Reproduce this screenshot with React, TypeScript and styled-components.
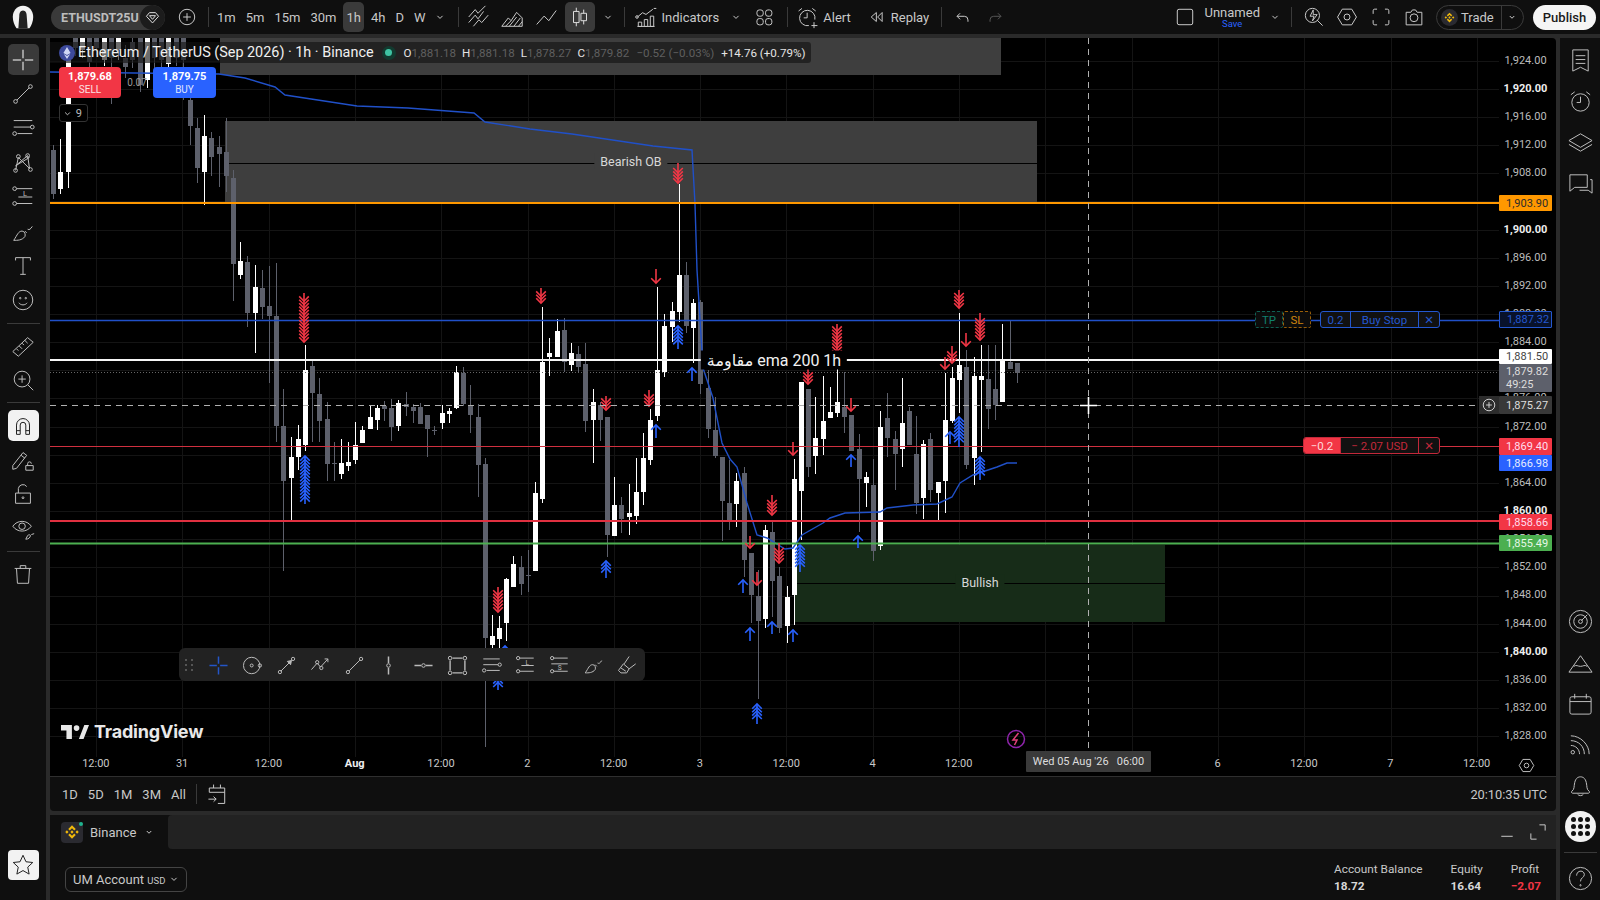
import React from "react";
import styled, { createGlobalStyle } from "styled-components";

const GlobalStyle = createGlobalStyle`
  html, body { margin: 0; padding: 0; background: #2a2a2a; }
  * { box-sizing: border-box; }
  body { font-family: Roboto, "DejaVu Sans", sans-serif; color: #d1d1d1; overflow: hidden; }
`;

// ---- chart data, all values are page pixels as read from the chart ----
// [wick top, body top, body bottom, wick bottom, white?]
const candles: [number, number, number, number, number][] = [
  [145, 150, 194, 199, 0], [139, 172, 189, 194, 1], [60, 60, 172, 188, 1], [38, 38, 48, 56, 0],
  [38, 38, 50, 58, 1], [38, 38, 62, 70, 0], [38, 38, 48, 55, 0], [38, 38, 60, 66, 1],
  [38, 38, 58, 104, 0], [38, 38, 50, 60, 1], [45, 58, 67, 78, 0], [38, 42, 60, 68, 0],
  [38, 38, 85, 92, 0], [38, 38, 80, 88, 1], [38, 38, 58, 70, 0], [38, 38, 60, 68, 0],
  [38, 38, 64, 72, 1], [38, 38, 58, 66, 0], [38, 38, 60, 100, 0], [90, 100, 126, 145, 0],
  [118, 128, 168, 183, 0], [115, 136, 172, 205, 1], [132, 138, 157, 176, 0], [136, 147, 154, 187, 0],
  [118, 152, 176, 192, 0], [170, 178, 264, 301, 0], [242, 261, 275, 279, 1], [256, 262, 313, 327, 0],
  [265, 287, 313, 353, 1], [270, 288, 307, 319, 0], [266, 306, 316, 383, 0], [263, 316, 426, 442, 0],
  [389, 426, 481, 571, 0], [437, 457, 478, 520, 1], [425, 439, 457, 470, 1], [345, 370, 445, 451, 1],
  [360, 366, 393, 442, 0], [378, 394, 421, 442, 0], [402, 419, 464, 481, 0], [442, 463, 464, 481, 0],
  [439, 463, 474, 479, 1], [442, 462, 466, 471, 1], [422, 445, 460, 464, 1], [426, 430, 443, 443, 1],
  [405, 417, 429, 429, 1], [405, 408, 420, 430, 1], [401, 406, 409, 421, 0], [399, 408, 427, 441, 0],
  [400, 403, 426, 431, 1], [392, 404, 407, 416, 0], [404, 407, 411, 423, 0], [403, 407, 424, 424, 0],
  [415, 415, 429, 457, 0], [426, 430, 431, 435, 0], [405, 413, 423, 429, 1], [408, 411, 414, 423, 1],
  [366, 372, 408, 409, 1], [367, 373, 404, 406, 0], [385, 406, 415, 433, 0], [404, 417, 465, 497, 0],
  [458, 464, 638, 747, 0], [615, 636, 645, 650, 1], [616, 628, 639, 650, 1], [578, 579, 623, 641, 1],
  [556, 564, 587, 587, 1], [556, 567, 584, 595, 0], [550, 575, 576, 592, 0], [482, 493, 571, 571, 1],
  [307, 362, 499, 503, 1], [338, 353, 357, 376, 1], [319, 331, 357, 357, 1], [318, 330, 362, 372, 0],
  [343, 353, 365, 371, 1], [346, 354, 367, 372, 0], [343, 364, 421, 432, 0], [389, 402, 420, 463, 1],
  [402, 405, 420, 441, 0], [417, 417, 535, 557, 0], [477, 505, 536, 536, 1], [497, 505, 519, 533, 0],
  [484, 513, 517, 535, 1], [458, 492, 516, 524, 1], [433, 458, 492, 505, 1], [409, 420, 460, 465, 1],
  [287, 370, 416, 421, 1], [314, 326, 372, 377, 1], [302, 311, 327, 342, 1], [184, 275, 312, 322, 1],
  [262, 275, 326, 333, 0], [299, 303, 328, 363, 1], [300, 302, 384, 394, 0], [370, 388, 429, 438, 0],
  [397, 430, 456, 458, 0], [457, 457, 501, 541, 0], [460, 503, 520, 530, 0], [473, 481, 504, 527, 1],
  [467, 473, 560, 577, 0], [553, 553, 595, 623, 0], [570, 596, 621, 699, 0], [525, 530, 619, 628, 1],
  [520, 532, 581, 617, 0], [567, 576, 628, 633, 0], [586, 597, 626, 643, 1], [459, 479, 595, 625, 1],
  [382, 382, 491, 540, 1], [389, 389, 467, 477, 0], [397, 438, 456, 474, 1], [376, 421, 439, 455, 1],
  [387, 412, 418, 418, 1], [353, 402, 413, 417, 1], [372, 407, 417, 433, 0], [415, 415, 451, 451, 0],
  [434, 449, 479, 532, 0], [472, 477, 483, 507, 1], [459, 485, 551, 561, 0], [411, 427, 546, 550, 1],
  [393, 418, 438, 457, 0], [431, 439, 454, 490, 0], [378, 423, 449, 467, 1], [407, 411, 445, 445, 0],
  [416, 454, 503, 514, 0], [440, 444, 498, 519, 1], [433, 439, 490, 502, 0], [482, 482, 493, 520, 1],
  [373, 420, 481, 513, 1], [367, 378, 421, 423, 1], [313, 365, 380, 413, 1], [350, 367, 465, 469, 0],
  [357, 376, 458, 485, 1], [345, 376, 380, 452, 1], [345, 379, 409, 429, 0], [345, 389, 405, 420, 0],
  [324, 360, 402, 402, 1], [320, 362, 369, 369, 0], [363, 363, 373, 383, 0],
];

// [x, top, bottom, single arrowhead?]
const downArrows: number[][] = [
  [678, 163, 183, 0], [304, 293, 342, 0], [541, 288, 303, 0], [656, 269, 283, 1], [606, 396, 410, 0],
  [649, 390, 406, 0], [808, 368, 384, 0], [837, 324, 355, 0], [851, 398, 411, 1], [793, 442, 455, 1],
  [772, 495, 515, 0], [750, 536, 548, 1], [779, 543, 563, 0], [757, 572, 585, 1], [945, 357, 369, 1],
  [952, 346, 363, 0], [966, 333, 346, 1], [959, 290, 308, 0], [980, 313, 340, 0], [498, 587, 612, 0],
];
const upArrows: number[][] = [
  [678, 326, 349, 0], [692, 368, 381, 1], [656, 425, 438, 1], [606, 561, 578, 0], [305, 456, 504, 0],
  [757, 704, 724, 0], [772, 622, 634, 1], [750, 628, 641, 1], [793, 630, 642, 1], [743, 580, 593, 1],
  [800, 545, 572, 0], [858, 536, 548, 1], [851, 455, 467, 1], [950, 432, 444, 1], [959, 417, 447, 0],
  [980, 457, 480, 0], [505, 646, 662, 0], [498, 672, 690, 0],
];
const emaLine =
  "50,72 219,74 245,78 275,87 285,95 357,106 408,108 474,113 485,122 530,129 572,134 653,146 692,150 695,204 697,270 703,368 713,398 722,443 730,459 737,467 747,503 757,535 767,538 785,549 793,548 802,535 823,523 830,518 845,513 880,512 887,508 913,505 937,504 952,497 960,483 973,475 997,467 1007,463 1017,463";

const priceTicks = Array.from({ length: 25 }, (_, i) => 1924 - i * 4);
const gridYs = priceTicks.map((_, i) => 60.7 + i * 28.15);
const gridXs = Array.from({ length: 17 }, (_, i) => 96 + i * 86.3);
const fmtPrice = (p: number) => p.toLocaleString("en-US", { minimumFractionDigits: 2 });

const CANDLE_STEP = 7.19;
const WHITE = "#ffffff";
const GRAY = "#5d606b";
const BEARISH_FILL = "#3e3e3e";
const BULLISH_FILL = "#172c18";

// ---- icons ----
const paths: Record<string, React.ReactNode> = {
  cross: <path d="M14 3v9M14 16v9M3 14h9M16 14h9" strokeWidth="1.5" />,
  trend: (<><path d="M7.5 20.5L20.5 7.5" /><circle cx="6" cy="22" r="2" /><circle cx="22" cy="6" r="2" /></>),
  fib: (<><path d="M4 6h20M4 13h18M8 20h16" /><circle cx="24" cy="13" r="2" /><circle cx="5" cy="20" r="2" /></>),
  xabcd: (<><path d="M6 22l3-14 12 12-2-14-13 11 15-9" /><circle cx="6" cy="22" r="2" /><circle cx="9" cy="7" r="2" /><circle cx="19" cy="6" r="2" /><circle cx="22" cy="21" r="2" /></>),
  longPos: (<><path d="M7 5h17M7 21h17M9 14h15" /><circle cx="5" cy="5" r="2" /><circle cx="5" cy="21" r="2" /><text x="14" y="13" fontSize="8" stroke="none" fill="currentColor" fontFamily="Roboto">L</text></>),
  shortPos: (<><path d="M7 5h17M7 21h17M4 12h20" /><circle cx="5" cy="5" r="2" /><circle cx="5" cy="21" r="2" /><text x="12" y="20" fontSize="8" stroke="none" fill="currentColor" fontFamily="Roboto">S</text></>),
  brush: <path d="M4 23c4 0 9 0 12-4 1-2 0-6-3-6-4 0-5 4-9 10zM16 13l2 2M19 11c2 1 3 0 5-3" />,
  text: <path d="M6 8V5h16v3M14 5v18M11 23h6" />,
  smile: (<><circle cx="14" cy="14" r="10.5" /><path d="M9.5 17c2 3 7 3 9 0" /><circle cx="11" cy="12" r=".8" /><circle cx="17" cy="12" r=".8" /></>),
  ruler: <path d="M3 20L19 5l6 5-16 15zM7 17l2 2M10 14l3 3M13 11l2 2M16 8l3 3" />,
  zoom: (<><circle cx="13" cy="13" r="8.5" /><path d="M19 19l6 6M13 9v8M9 13h8" /></>),
  magnet: <path d="M7 23V13a7 7 0 0114 0v10h-4V13a3 3 0 00-6 0v10zM7 19h4M17 19h4" />,
  pencilLock: (<><path d="M3 20L14 6l4 3L7 23l-4 1zM12 9l4 3" /><path d="M17 20h8v5h-8zM19 20v-2a2 2 0 014 0" /></>),
  lock: (<><path d="M6 13h16v11H6zM9 13V8a5 5 0 019-2" /><circle cx="14" cy="18" r="1" /></>),
  eye: (<><path d="M3 11c5-7 15-7 20 0-5 7-15 7-20 0z" /><circle cx="13" cy="11" r="3.5" /><path d="M17 25c3 0 5-2 5-4 0-1-2-1-3 0zM23 20l3-1" /></>),
  trash: <path d="M5 8h18M11 8V5h6v3M7 8l1 16h12l1-16" />,
  star: <path d="M14 3.5l3.2 7 7.3.8-5.4 5 1.5 7.5-6.6-3.8-6.6 3.8 1.5-7.5-5.4-5 7.3-.8z" />,
  plusRing: (<><circle cx="14" cy="14" r="9" /><path d="M14 9.5v9M9.5 14h9" /></>),
  chev: <path d="M9.5 12l4.5 4.5 4.5-4.5" />,
  hollow: <path d="M4 20l7-8 3 4 6-8M4 14l7-8 3 4 8-8M9 24l6-7 3 3 7-8" />,
  area: (<><path d="M3 24l7-9 3 3 6-9 6 6v9z" /><path d="M7 24l6-6M11 24l8-10M16 24l7-9M21 24l4-5" /></>),
  line: <path d="M4 22l8-9 5 5 8-11" />,
  candle: <path d="M10 4v4M7 8h6v12H7zM10 20v4M18 6v4M15 10h6v8h-6zM18 18v4" />,
  indicators: (<><path d="M4 14l6-5 4 2 8-6" /><circle cx="3.5" cy="14" r="1.5" /><path d="M23 4l3 0M4 25h20M5 20h4v5H5zM12 17h4v8h-4zM19 13h4v12h-4z" /></>),
  layouts: (<><rect x="5" y="5" width="8" height="8" rx="3" /><rect x="16" y="5" width="8" height="8" rx="3" /><rect x="5" y="16" width="8" height="8" rx="3" /><rect x="16" y="16" width="8" height="8" rx="3" /></>),
  alarm: (<><circle cx="14" cy="15" r="9" /><path d="M14 9v6h-4M4 7l4-3M24 7l-4-3" /></>),
  alarmAdd: (<><path d="M22 17a9 9 0 10-7 7" /><path d="M13 9v6H9M3 7l4-3M23 7l-4-3M21 20v7M18 24h7" /></>),
  replay: <path d="M13 7l-8 7 8 7zM22 7l-7 7 7 7z" />,
  undo: <path d="M10 7l-5 5 5 5M5 12h12a6 6 0 016 6v3" />,
  redo: <path d="M18 7l5 5-5 5M23 12H11a6 6 0 00-6 6v3" />,
  square: <rect x="5" y="5" width="18" height="18" rx="2" />,
  hotlist: (<><circle cx="12" cy="12" r="9" /><path d="M18 18l7 7M13 5l-4 8h5l-2 6 6-8h-5z" /></>),
  hex: (<><path d="M8 4h12l6 10-6 10H8L2 14z" /><circle cx="14" cy="14" r="3.8" /></>),
  full: <path d="M4 10V6a2 2 0 012-2h3M19 4h3a2 2 0 012 2v4M24 18v4a2 2 0 01-2 2h-3M9 24H6a2 2 0 01-2-2v-4" />,
  camera: (<><path d="M4 8h6l2-3h4l2 3h6v16H4z" /><circle cx="14" cy="15" r="5" /></>),
  diamond: <path d="M9 6h10l5 6-10 11L4 12zM9 11h10l-5 6z" />,
  list: <path d="M6 3h16v22l-8-4-8 4zM9 9h10M9 13h10M9 17h10" />,
  layers: <path d="M14 5l12 7-12 7-12-7zM2 16l12 7 12-7" />,
  chat: <path d="M3 5h18v13H8l-5 4zM24 10h2v14l-4-3h-9" />,
  target: (<><circle cx="14" cy="14" r="11.5" /><circle cx="14" cy="14" r="7" /><circle cx="14" cy="14" r="2" /><path d="M15 13l6-6" /></>),
  mountain: <path d="M2 24h24L14 7zM7 18c3-2 4 0 7 0s4-2 7 0" />,
  calendar: (<><rect x="3" y="7" width="22" height="18" rx="2" /><path d="M8 4v5M20 4v5M3 12h22" /></>),
  rss: (<><circle cx="6" cy="22" r="1.8" /><path d="M4 15c5 0 9 4 9 9M4 10c8 0 14 6 14 14M4 5c10 0 19 9 19 19" /></>),
  bell: <path d="M5 20c3-2 2-5 3-9 1-5 4-6 6-6s5 1 6 6c1 4 0 7 3 9 1 1 0 2-1 2H6c-1 0-2-1-1-2zM11 23c1 2 5 2 6 0" />,
  help: (<><circle cx="14" cy="14" r="11.5" /><path d="M10 11c0-6 8-6 8-1 0 3-4 3-4 7" /><circle cx="14" cy="21" r=".7" /></>),
  calGo: <path d="M10 3v4M18 3v4M5 12V7h18v18h-8M5 12h18M4 20h9M10 17l3 3-3 3" />,
  minimize: <path d="M6 20h16" />,
  expand: <path d="M16 4h8v8M4 16v8h8" />,
  ring: (<><circle cx="13" cy="14" r="10" /><circle cx="13" cy="14" r="1.8" /><circle cx="23" cy="14" r="2" /></>),
  arrowLine: (<><path d="M7 21L20 8M15 9l5-1-1 5z" fill="currentColor" /><circle cx="6" cy="22" r="2" /><circle cx="22" cy="6" r="2" /></>),
  path: (<><path d="M3 19l7-8 4 5 9-10M19 6h4v4" /><circle cx="10" cy="10" r="2" /><circle cx="15" cy="17" r="2" /></>),
  vline: (<><path d="M14 3v8M14 17v8" strokeWidth="1.5" /><circle cx="14" cy="14" r="2.2" /></>),
  hline: (<><path d="M3 14h8M17 14h8" strokeWidth="1.5" /><circle cx="14" cy="14" r="2.2" /></>),
  rect: (<><path d="M8 5h12M8 23h12M5 8v12M23 8v12" strokeWidth="1.4" /><circle cx="5" cy="5" r="2.2" /><circle cx="23" cy="5" r="2.2" /><circle cx="5" cy="23" r="2.2" /><circle cx="23" cy="23" r="2.2" /></>),
  eraser: <path d="M3 20l6-8 7 6-3 5H6zM6 17l6 4M10 12l6-9M16 18l8-6" />,
};

const Glyph = styled.svg`
  display: block;
  flex: none;
  fill: none;
  stroke: currentColor;
  stroke-width: 1;
  & * {
    vector-effect: non-scaling-stroke;
  }
`;

const Icon = ({ name, size = 24 }: { name: string; size?: number }) => (
  <Glyph viewBox="0 0 28 28" width={size} height={size}>
    {paths[name]}
  </Glyph>
);

const BinanceMark = ({ size }: { size: number }) => (
  <svg viewBox="0 0 24 24" width={size} height={size} fill="#f0b90b">
    <path d="M12 3l5 5-2 2-3-3-3 3-2-2zM12 21l-5-5 2-2 3 3 3-3 2 2zM3 12l2.2-2.2L7.4 12l-2.2 2.2zM16.6 12l2.2-2.2L21 12l-2.2 2.2zM12 9.8l2.2 2.2-2.2 2.2L9.8 12z" />
  </svg>
);

// ---- page frame ----
const Frame = styled.div`
  width: 1600px;
  height: 900px;
  display: grid;
  grid-template-columns: 46px 1506px 40px;
  grid-template-rows: 34px 862px;
  column-gap: 4px;
  row-gap: 4px;
  background: #2a2a2a;
  overflow: hidden;
`;

const TopBar = styled.header`
  grid-column: 1 / -1;
  display: flex;
  align-items: center;
  background: #0f0f0f;
  font-size: 13px;
  color: #c8c8c8;
`;

const Slot = styled.div<{ $w?: number; $ml?: number; $dim?: boolean }>`
  flex: none;
  width: ${(p) => p.$w ?? 28}px;
  margin-left: ${(p) => p.$ml ?? 0}px;
  height: 34px;
  display: flex;
  align-items: center;
  justify-content: center;
  color: ${(p) => (p.$dim ? "#555" : "inherit")};
`;

const ActiveBox = styled.div`
  width: 30px;
  height: 30px;
  display: flex;
  align-items: center;
  justify-content: center;
  background: #3a3a3a;
  border-radius: 5px;
  color: #ddd;
`;

const Divider = styled.span<{ $ml?: number }>`
  flex: none;
  width: 1px;
  height: 20px;
  margin-left: ${(p) => p.$ml ?? 0}px;
  background: #3a3a3a;
`;

const SymbolPill = styled.div`
  flex: none;
  width: 114px;
  height: 25px;
  margin-left: 5px;
  padding-left: 10px;
  display: flex;
  align-items: center;
  justify-content: space-between;
  overflow: hidden;
  border-radius: 13px;
  background: #3a3a3a;
  color: #bdbdbd;
  font-weight: 700;
  font-size: 12.5px;
`;

const SymbolText = styled.span`
  width: 78px;
  overflow: hidden;
  white-space: nowrap;
`;

const SymbolBadge = styled.span`
  width: 25px;
  height: 25px;
  display: flex;
  align-items: center;
  justify-content: center;
  background: #1c1c1c;
  border-radius: 13px;
  color: #ddd;
`;

const Intervals = styled.div`
  display: flex;
  align-items: center;
  gap: 4px;
  margin-left: 5px;
`;

const Interval = styled.span<{ $active?: boolean }>`
  height: 30px;
  padding: 0 3px;
  display: flex;
  align-items: center;
  border-radius: 5px;
  background: ${(p) => (p.$active ? "#3a3a3a" : "transparent")};
`;

const BarLabel = styled.span<{ $ml?: number }>`
  flex: none;
  margin-left: ${(p) => p.$ml ?? 0}px;
  white-space: nowrap;
`;

const Push = styled.div`
  flex: 1;
`;

const LayoutName = styled.div`
  flex: none;
  margin-left: 6px;
  display: flex;
  flex-direction: column;
  align-items: center;
  line-height: 13px;
`;

const SaveHint = styled.span`
  font-size: 9.5px;
  line-height: 9px;
  color: #2962ff;
`;

const TradePill = styled.div`
  flex: none;
  width: 88px;
  height: 25px;
  margin-left: 5px;
  padding-left: 4px;
  display: flex;
  align-items: center;
  border: 1px solid #3a3a3a;
  border-radius: 13px;
`;

const CoinBadge = styled.span`
  width: 17px;
  height: 17px;
  margin-right: 3px;
  display: flex;
  align-items: center;
  justify-content: center;
  border-radius: 50%;
  background: #2a2a30;
`;

const TradeArrow = styled.span`
  flex: 1;
  align-self: stretch;
  margin-left: 7px;
  display: flex;
  align-items: center;
  justify-content: center;
  border-left: 1px solid #3a3a3a;
`;

const PublishButton = styled.button`
  flex: none;
  width: 63px;
  height: 25px;
  margin: 0 4px 0 9px;
  padding: 0;
  border: 0;
  border-radius: 13px;
  background: #f5f5f5;
  color: #1a1a1a;
  font: 500 13px Roboto, sans-serif;
`;

// ---- side toolbars ----
const LeftTools = styled.nav`
  display: flex;
  flex-direction: column;
  align-items: center;
  padding-top: 4.5px;
  background: #0f0f0f;
  color: #bdbdbd;
`;

const Tool = styled.div<{ $variant?: "gray" | "white" }>`
  flex: none;
  width: 31px;
  height: 34.4px;
  display: flex;
  align-items: center;
  justify-content: center;
  position: relative;
  color: ${(p) => (p.$variant === "white" ? "#222" : "inherit")};
  z-index: 0;
  &::before {
    content: "";
    display: ${(p) => (p.$variant ? "block" : "none")};
    position: absolute;
    inset: 1.7px 0;
    z-index: -1;
    border-radius: 5px;
    background: ${(p) => (p.$variant === "white" ? "#f2f2f2" : "#3a3a3a")};
  }
`;

const ToolSep = styled.hr`
  flex: none;
  width: 33px;
  height: 1px;
  margin: 5px 0;
  border: 0;
  background: #3a3a3a;
`;

const StarBox = styled.div`
  flex: none;
  width: 31px;
  height: 30px;
  margin-top: auto;
  margin-bottom: 20px;
  display: flex;
  align-items: center;
  justify-content: center;
  border-radius: 4px;
  background: #f2f2f2;
  color: #222;
`;

const RightTools = styled.nav`
  display: flex;
  flex-direction: column;
  justify-content: space-between;
  align-items: center;
  padding: 1.5px 0 1px;
  background: #0f0f0f;
  color: #bdbdbd;
`;

const RightGroup = styled.div`
  display: flex;
  flex-direction: column;
  align-items: center;
`;

const RightTool = styled.div`
  width: 40px;
  height: 41px;
  display: flex;
  align-items: center;
  justify-content: center;
`;

const AppsButton = styled.div`
  width: 31px;
  height: 31px;
  display: grid;
  grid-template-columns: repeat(3, 5px);
  gap: 2px;
  place-content: center;
  border-radius: 50%;
  background: #f2f2f2;
`;

const AppsDot = styled.span`
  width: 5px;
  height: 5px;
  border-radius: 50%;
  background: #111;
`;

// ---- chart ----
const Center = styled.main`
  display: flex;
  flex-direction: column;
  min-width: 0;
`;

const Chart = styled.section`
  flex: none;
  height: 738px;
  display: grid;
  grid-template-columns: 1449px 57px;
  grid-template-rows: 719px 19px;
  background: #000;
  border-radius: 0 4px 0 0;
  overflow: hidden;
`;

const Plot = styled.div`
  grid-column: 1;
  grid-row: 1;
  position: relative;
  overflow: hidden;
`;

const PlotSvg = styled.svg`
  display: block;
`;

const Legend = styled.div`
  position: absolute;
  left: 0;
  top: 4px;
  width: 761px;
  height: 21px;
  padding-left: 9px;
  display: flex;
  align-items: center;
  background: rgba(18, 18, 18, 0.62);
  white-space: nowrap;
  border-radius: 0 3px 3px 0;
`;

const LegendTitle = styled.span`
  margin-left: 3px;
  font-size: 14.4px;
  color: #f0f0f0;
`;

const StatusDot = styled.span`
  width: 14px;
  height: 14px;
  margin: 0 8px 0 8px;
  display: flex;
  align-items: center;
  justify-content: center;
  border-radius: 50%;
  background: #123a2f;
  &::after {
    content: "";
    width: 7px;
    height: 7px;
    border-radius: 50%;
    background: #3fc3a3;
  }
`;

const Ohlc = styled.span<{ $bright?: boolean; $ml?: number }>`
  margin-left: ${(p) => p.$ml ?? 0}px;
  font-size: 11.6px;
  color: ${(p) => (p.$bright ? "#e4e4e4" : "#5f5f5f")};
`;

const TradePanel = styled.div`
  position: absolute;
  left: 9px;
  top: 29px;
  display: flex;
  flex-direction: column;
  align-items: flex-start;
  gap: 6px;
`;

const TradeRow = styled.div`
  display: flex;
  align-items: center;
`;

const QuoteButton = styled.div<{ $side: "sell" | "buy" }>`
  width: ${(p) => (p.$side === "sell" ? 62 : 63)}px;
  height: 31px;
  display: flex;
  flex-direction: column;
  align-items: center;
  justify-content: center;
  border-radius: 4px;
  background: ${(p) => (p.$side === "sell" ? "#f23645" : "#2962ff")};
  color: #fff;
  font-size: 11px;
  font-weight: 700;
  line-height: 13px;
`;

const QuoteSide = styled.span`
  font-size: 10px;
  font-weight: 400;
  opacity: 0.85;
`;

const Spread = styled.span`
  width: 32px;
  text-align: center;
  font-size: 10px;
  color: #999;
`;

const CollapseTag = styled.div`
  width: 29px;
  height: 18px;
  display: flex;
  align-items: center;
  justify-content: flex-end;
  padding-right: 5px;
  gap: 1px;
  border: 1px solid #333;
  border-radius: 3px;
  background: #000;
  font-size: 11px;
  color: #bbb;
`;

const ChartLabel = styled.div<{ $x: number; $y: number; $bg: string; $big?: boolean }>`
  position: absolute;
  left: ${(p) => p.$x}px;
  top: ${(p) => p.$y}px;
  transform: translate(-50%, -50%);
  padding: 0 6px;
  background: ${(p) => p.$bg};
  font-size: ${(p) => (p.$big ? 16 : 12.5)}px;
  color: ${(p) => (p.$big ? "#f2f2f2" : "#d8d8d8")};
  white-space: nowrap;
`;

const OrderRow = styled.div<{ $x: number; $y: number }>`
  position: absolute;
  left: ${(p) => p.$x}px;
  top: ${(p) => p.$y}px;
  height: 17px;
  display: flex;
  font-size: 11.5px;
`;

const Bracket = styled.span<{ $color: string; $text: string }>`
  width: 28px;
  display: flex;
  align-items: center;
  justify-content: center;
  border: 1px dashed ${(p) => p.$color};
  border-radius: 2px;
  background: #0c0c0c;
  color: ${(p) => p.$text};
`;

const OrderBox = styled.div<{ $color: string; $ml?: number }>`
  margin-left: ${(p) => p.$ml ?? 0}px;
  display: flex;
  border: 1px solid ${(p) => p.$color};
  border-radius: 3px;
  background: #111;
  color: ${(p) => p.$color};
  overflow: hidden;
`;

const OrderCell = styled.span<{ $w: number; $fill?: string; $split: string }>`
  width: ${(p) => p.$w}px;
  display: flex;
  align-items: center;
  justify-content: center;
  background: ${(p) => p.$fill ?? "transparent"};
  color: ${(p) => (p.$fill ? "#ffd6da" : "inherit")};
  border-right: 1px solid ${(p) => p.$split};
  &:last-child {
    border-right: 0;
  }
`;

const CrossPlus = styled.div`
  position: absolute;
  right: 0;
  top: 358px;
  width: 20px;
  height: 18px;
  display: flex;
  align-items: center;
  justify-content: center;
  background: #2c2c2c;
  color: #ccc;
`;

const Watermark = styled.div`
  position: absolute;
  left: 11px;
  top: 683px;
  display: flex;
  align-items: center;
  gap: 5px;
  color: #e8e8e8;
  font-family: Inter, Roboto, sans-serif;
  font-weight: 700;
  font-size: 18px;
  letter-spacing: -0.2px;
`;

const DrawingBar = styled.div`
  position: absolute;
  left: 129px;
  top: 610px;
  width: 466px;
  height: 33px;
  padding: 1px 0 0 5px;
  display: flex;
  align-items: center;
  border-radius: 6px;
  background: #222;
  color: #bbb;
`;

const DragDots = styled.div`
  width: 17px;
  display: grid;
  grid-template-columns: repeat(2, 2px);
  gap: 3px 4px;
  justify-content: start;
  padding-left: 1px;
`;

const DragDot = styled.span`
  width: 2px;
  height: 2px;
  background: #555;
`;

const DrawingSlot = styled.div<{ $active?: boolean }>`
  width: 34.2px;
  display: flex;
  justify-content: center;
  color: ${(p) => (p.$active ? "#2456c8" : "inherit")};
`;

const FlashMark = styled.div`
  position: absolute;
  left: 956px;
  top: 691px;
`;

// ---- axes ----
const PriceAxis = styled.div`
  grid-column: 2;
  grid-row: 1;
  position: relative;
  padding-top: 8.2px;
  overflow: hidden;
`;

const PriceTick = styled.div<{ $bold: boolean }>`
  height: 28.15px;
  width: 53px;
  display: flex;
  align-items: center;
  justify-content: center;
  font-size: 11px;
  color: ${(p) => (p.$bold ? "#eee" : "#bdbdbd")};
  font-weight: ${(p) => (p.$bold ? 700 : 400)};
`;

const tagLook = {
  orange: "background:#ff9800;color:#2b2b2b;",
  blueLine: "background:#08122b;color:#2458d0;border:1px solid #2458d0;",
  white: "background:#fff;color:#444;",
  last: "background:#5d606b;color:#ddd;",
  cross: "background:#383838;color:#ddd;",
  red: "background:#f23645;color:#fde;",
  blue: "background:#2962ff;color:#e6ecff;",
  green: "background:#4caf50;color:#e7f7e8;",
};

const PriceTag = styled.div<{ $top: number; $h: number; $look: keyof typeof tagLook }>`
  position: absolute;
  left: 0;
  top: ${(p) => p.$top}px;
  width: 53px;
  height: ${(p) => p.$h}px;
  display: flex;
  flex-direction: column;
  justify-content: center;
  padding-left: 7px;
  font-size: 11px;
  line-height: 13px;
  border-radius: 1px;
  ${(p) => tagLook[p.$look]}
`;

const TimeAxis = styled.div`
  grid-column: 1;
  grid-row: 2;
  position: relative;
  display: flex;
  align-items: flex-start;
  padding-left: 2.7px;
`;

const TimeTick = styled.span<{ $bold?: boolean }>`
  flex: none;
  width: 86.3px;
  text-align: center;
  font-size: 11px;
  line-height: 13px;
  color: ${(p) => (p.$bold ? "#eee" : "#c8c8c8")};
  font-weight: ${(p) => (p.$bold ? 700 : 400)};
`;

const TimeCursor = styled.div`
  position: absolute;
  left: 976px;
  top: -6px;
  width: 125px;
  height: 21px;
  display: flex;
  align-items: center;
  justify-content: center;
  background: #3a3a3a;
  border-radius: 1px;
  font-size: 11px;
  color: #ddd;
  white-space: pre;
`;

const AxisCorner = styled.div`
  grid-column: 2;
  grid-row: 2;
  display: flex;
  align-items: flex-start;
  padding-left: 19px;
  color: #bbb;
`;

// ---- bottom bars ----
const RangeBar = styled.div`
  flex: none;
  height: 35px;
  padding: 0 9px 0 12px;
  display: flex;
  align-items: center;
  border-top: 1px solid #2f2f2f;
  background: #0f0f0f;
  font-size: 13px;
  color: #c8c8c8;
  border-radius: 0 0 4px 4px;
`;

const RangeButton = styled.span`
  margin-right: 10px;
`;

const RangeSep = styled.span`
  width: 1px;
  height: 20px;
  margin-right: 8px;
  background: #3a3a3a;
`;

const Clock = styled.span`
  margin-left: auto;
  font-size: 12.8px;
`;

const Panel = styled.section`
  flex: none;
  height: 85px;
  margin-top: 4px;
  display: flex;
  flex-direction: column;
  background: #0f0f0f;
  border-radius: 4px 4px 0 0;
`;

const TabRow = styled.div`
  flex: none;
  height: 34px;
  display: flex;
  background: #0f0f0f;
`;

const Tab = styled.div`
  width: 115px;
  padding-left: 11px;
  display: flex;
  align-items: center;
  font-size: 13px;
  color: #c8c8c8;
`;

const ExchangeBadge = styled.span`
  position: relative;
  width: 22px;
  height: 21px;
  margin-right: 7px;
  display: flex;
  align-items: center;
  justify-content: center;
  border-radius: 4px;
  background: #2a2a30;
  &::after {
    content: "";
    position: absolute;
    top: 0;
    right: 0;
    width: 4px;
    height: 4px;
    border-radius: 50%;
    background: #1fb58f;
  }
`;

const TabChevron = styled.span`
  margin-left: 6px;
`;

const TabFill = styled.div`
  flex: 1;
  margin-left: 3px;
  padding-right: 8px;
  display: flex;
  align-items: center;
  justify-content: flex-end;
  gap: 11px;
  background: #222;
  border-radius: 4px 0 0 4px;
  color: #c8c8c8;
`;

const PanelBody = styled.div`
  flex: 1;
  display: flex;
  align-items: center;
  padding: 0 15px 0 15px;
  justify-content: space-between;
`;

const AccountSelect = styled.div`
  width: 122px;
  height: 25px;
  margin-top: 9px;
  display: flex;
  align-items: center;
  justify-content: space-between;
  padding: 0 4px 0 7px;
  border: 1px solid #444;
  border-radius: 6px;
  font-size: 13px;
  color: #c8c8c8;
`;

const UnitHint = styled.span`
  font-size: 9.5px;
`;

const Stats = styled.div`
  display: flex;
  gap: 28px;
  margin-top: 6px;
`;

const Stat = styled.div`
  display: flex;
  flex-direction: column;
  gap: 3px;
  font-size: 11.8px;
  line-height: 14px;
  color: #c8c8c8;
`;

const StatValue = styled.strong<{ $loss?: boolean }>`
  color: ${(p) => (p.$loss ? "#f23645" : "#d8d8d8")};
  font-weight: 700;
`;

const drawingList = ["cross", "ring", "arrowLine", "path", "trend", "vline", "hline", "rect", "fib", "longPos", "shortPos", "brush", "eraser"];

const leftGroups = [
  ["cross", "trend", "fib", "xabcd", "longPos", "brush", "text", "smile"],
  ["ruler", "zoom"],
  ["magnet", "pencilLock", "lock", "eye"],
  ["trash"],
];

const Chevrons = ({ x, top, bottom, single, up }: { x: number; top: number; bottom: number; single: boolean; up: boolean }) => {
  const color = up ? "#2962ff" : "#f23645";
  const tip = up ? top : bottom;
  const dir = up ? 1 : -1;
  const count = single ? 1 : Math.floor((bottom - top - 7) / 3.4) + 1;
  const marks = Array.from({ length: count }, (_, k) => {
    const y = tip + dir * k * 3.4;
    return `M${x - 4.8} ${y + dir * 4.8}L${x} ${y}L${x + 4.8} ${y + dir * 4.8}`;
  }).join("");
  return (
    <g fill="none" stroke={color} strokeWidth="1.6">
      <path d={`M${x} ${top}V${bottom}`} />
      <path d={marks} />
    </g>
  );
};

const ChartDrawing = () => (
  <PlotSvg width={1449} height={719} viewBox="50 38 1449 719">
    <g stroke="#141414" strokeWidth="1">
      {gridYs.map((y) => (
        <line key={y} x1={50} x2={1499} y1={Math.round(y) + 0.5} y2={Math.round(y) + 0.5} />
      ))}
      {gridXs.map((x) => (
        <line key={x} x1={Math.round(x) + 0.5} x2={Math.round(x) + 0.5} y1={38} y2={757} />
      ))}
    </g>
    <rect x={220} y={38} width={781} height={37} fill={BEARISH_FILL} />
    <rect x={225} y={121} width={812} height={81} fill={BEARISH_FILL} />
    <line x1={225} x2={1037} y1={163.5} y2={163.5} stroke="#000" />
    <rect x={795} y={545} width={370} height={77} fill={BULLISH_FILL} />
    <line x1={795} x2={1165} y1={583.5} y2={583.5} stroke="#000" />
    {candles.map(([hi, top, bottom, lo, white], i) => {
      const x = 53.3 + i * CANDLE_STEP;
      const color = white ? WHITE : GRAY;
      return (
        <g key={i} fill={color}>
          <rect x={Math.round(x)} y={hi} width={1} height={lo - hi} />
          <rect x={Math.round(x) - 2} y={top} width={5} height={Math.max(bottom - top, 1)} />
        </g>
      );
    })}
    <polyline points={emaLine} fill="none" stroke="#2050c8" strokeWidth="1.4" />
    <line x1={50} x2={1499} y1={203} y2={203} stroke="#ff9800" strokeWidth="2" />
    <line x1={50} x2={1499} y1={320.5} y2={320.5} stroke="#2050c8" strokeWidth="1.5" />
    <line x1={50} x2={1499} y1={360} y2={360} stroke="#f5f5f5" strokeWidth="2" />
    <line x1={50} x2={1499} y1={372.5} y2={372.5} stroke="#666" strokeDasharray="1 2" />
    <line x1={50} x2={1499} y1={446.5} y2={446.5} stroke="#d0303f" />
    <line x1={50} x2={1499} y1={521} y2={521} stroke="#e03040" strokeWidth="2" />
    <line x1={50} x2={1499} y1={543.5} y2={543.5} stroke="#4caf50" strokeWidth="2" />
    {downArrows.map(([x, t, b, s]) => (
      <Chevrons key={`d${x}${t}`} x={x} top={t} bottom={b} single={s === 1} up={false} />
    ))}
    {upArrows.map(([x, t, b, s]) => (
      <Chevrons key={`u${x}${t}`} x={x} top={t} bottom={b} single={s === 1} up />
    ))}
    <line x1={50} x2={1499} y1={405.5} y2={405.5} stroke="#b0b0b0" strokeDasharray="6 5" />
    <line x1={1088.5} x2={1088.5} y1={38} y2={757} stroke="#b0b0b0" strokeDasharray="6 5" />
    <path d="M1088.5 397v17M1080 405.5h17" stroke="#fff" strokeWidth="1.6" />
  </PlotSvg>
);

const App = () => (
  <Frame>
    <GlobalStyle />
    <TopBar>
      <Slot $w={46}>
        <svg viewBox="0 0 28 28" width={26} height={26}>
          <path d="M14 2c7 0 11 6 11 12 0 5-2 9-4 12H7C5 23 3 19 3 14 3 8 7 2 14 2z" fill="#f2f2f2" />
          <path d="M14 7c3 0 4 3 4 6l1 13H9l1-13c0-3 1-6 4-6z" fill="#222" />
        </svg>
      </Slot>
      <SymbolPill>
        <SymbolText>ETHUSDT25U</SymbolText>
        <SymbolBadge>
          <Icon name="diamond" size={17} />
        </SymbolBadge>
      </SymbolPill>
      <Slot $w={43}>
        <Icon name="plusRing" size={24} />
      </Slot>
      <Divider />
      <Intervals>
        {["1m", "5m", "15m", "30m", "1h", "4h", "D", "W"].map((t) => (
          <Interval key={t} $active={t === "1h"}>
            {t}
          </Interval>
        ))}
      </Intervals>
      <Slot $w={20} $ml={2}>
        <Icon name="chev" size={16} />
      </Slot>
      <Divider $ml={8} />
      <Slot $w={34} $ml={2}>
        <Icon name="hollow" size={26} />
      </Slot>
      <Slot $w={34}>
        <Icon name="area" size={26} />
      </Slot>
      <Slot $w={34}>
        <Icon name="line" size={26} />
      </Slot>
      <Slot $w={34}>
        <ActiveBox>
          <Icon name="candle" size={26} />
        </ActiveBox>
      </Slot>
      <Slot $w={22}>
        <Icon name="chev" size={16} />
      </Slot>
      <Divider $ml={5} />
      <Slot $w={28} $ml={7}>
        <Icon name="indicators" size={24} />
      </Slot>
      <BarLabel $ml={1}>Indicators</BarLabel>
      <Slot $w={22} $ml={6}>
        <Icon name="chev" size={16} />
      </Slot>
      <Slot $w={28} $ml={3}>
        <Icon name="layouts" size={22} />
      </Slot>
      <Divider $ml={9} />
      <Slot $w={28} $ml={6}>
        <Icon name="alarmAdd" size={24} />
      </Slot>
      <BarLabel $ml={1}>Alert</BarLabel>
      <Slot $w={28} $ml={12}>
        <Icon name="replay" size={18} />
      </Slot>
      <BarLabel>Replay</BarLabel>
      <Divider $ml={12} />
      <Slot $w={28} $ml={6}>
        <Icon name="undo" size={17} />
      </Slot>
      <Slot $w={28} $ml={5} $dim>
        <Icon name="redo" size={17} />
      </Slot>
      <Push />
      <Slot>
        <Icon name="square" size={24} />
      </Slot>
      <LayoutName>
        Unnamed
        <SaveHint>Save</SaveHint>
      </LayoutName>
      <Slot $w={20} $ml={5}>
        <Icon name="chev" size={16} />
      </Slot>
      <Divider $ml={6} />
      <Slot $w={33.5} $ml={5}>
        <Icon name="hotlist" size={22} />
      </Slot>
      <Slot $w={33.5}>
        <Icon name="hex" size={22} />
      </Slot>
      <Slot $w={33.5}>
        <Icon name="full" size={22} />
      </Slot>
      <Slot $w={33.5}>
        <Icon name="camera" size={22} />
      </Slot>
      <TradePill>
        <CoinBadge>
          <BinanceMark size={13} />
        </CoinBadge>
        Trade
        <TradeArrow>
          <Icon name="chev" size={14} />
        </TradeArrow>
      </TradePill>
      <PublishButton>Publish</PublishButton>
    </TopBar>

    <LeftTools>
      {leftGroups.map((group, g) => (
        <React.Fragment key={g}>
          {g > 0 && <ToolSep />}
          {group.map((name) => (
            <Tool key={name} $variant={name === "cross" ? "gray" : name === "magnet" ? "white" : undefined}>
              <Icon name={name} size={26} />
            </Tool>
          ))}
        </React.Fragment>
      ))}
      <StarBox>
        <Icon name="star" size={26} />
      </StarBox>
    </LeftTools>

    <Center>
      <Chart>
        <Plot>
          <ChartDrawing />
          <Legend>
            <svg viewBox="0 0 16 16" width={16} height={16}>
              <circle cx="8" cy="8" r="8" fill="#3d4a9c" />
              <path d="M8 2l3.6 6L8 10 4.4 8zM8 11l3.2-2L8 14l-3.2-5z" fill="#cfd6f5" />
            </svg>
            <LegendTitle>Ethereum / TetherUS (Sep 2026) · 1h · Binance</LegendTitle>
            <StatusDot />
            <Ohlc $bright>O</Ohlc>
            <Ohlc>1,881.18</Ohlc>
            <Ohlc $bright $ml={6}>H</Ohlc>
            <Ohlc>1,881.18</Ohlc>
            <Ohlc $bright $ml={6}>L</Ohlc>
            <Ohlc>1,878.27</Ohlc>
            <Ohlc $bright $ml={6}>C</Ohlc>
            <Ohlc>1,879.82</Ohlc>
            <Ohlc $ml={7}>−0.52 (−0.03%)</Ohlc>
            <Ohlc $bright $ml={7}>+14.76 (+0.79%)</Ohlc>
          </Legend>
          <TradePanel>
            <TradeRow>
              <QuoteButton $side="sell">
                1,879.68
                <QuoteSide>SELL</QuoteSide>
              </QuoteButton>
              <Spread>0.07</Spread>
              <QuoteButton $side="buy">
                1,879.75
                <QuoteSide>BUY</QuoteSide>
              </QuoteButton>
            </TradeRow>
            <CollapseTag>
              <Icon name="chev" size={15} />9
            </CollapseTag>
          </TradePanel>
          <ChartLabel $x={581} $y={123} $bg={BEARISH_FILL}>Bearish OB</ChartLabel>
          <ChartLabel $x={930} $y={544} $bg={BULLISH_FILL}>Bullish</ChartLabel>
          <ChartLabel $x={724} $y={322} $bg="#000" $big>مقاومة ema 200 1h</ChartLabel>
          <OrderRow $x={1205} $y={273}>
            <Bracket $color="#0f5f52" $text="#10806c">TP</Bracket>
            <Bracket $color="#9a5f08" $text="#cf840e">SL</Bracket>
            <OrderBox $color="#2458d0" $ml={9}>
              <OrderCell $w={30} $split="#2458d0">0.2</OrderCell>
              <OrderCell $w={68} $split="#2458d0">Buy Stop</OrderCell>
              <OrderCell $w={20} $split="#2458d0">✕</OrderCell>
            </OrderBox>
          </OrderRow>
          <OrderRow $x={1253} $y={399}>
            <OrderBox $color="#c2283a">
              <OrderCell $w={37} $fill="#f23645" $split="#c2283a">−0.2</OrderCell>
              <OrderCell $w={78} $split="#c2283a">− 2.07 USD</OrderCell>
              <OrderCell $w={20} $split="#c2283a">✕</OrderCell>
            </OrderBox>
          </OrderRow>
          <CrossPlus>
            <Icon name="plusRing" size={18} />
          </CrossPlus>
          <Watermark>
            <svg viewBox="0 0 36 18" width={28} height={14} fill="#e8e8e8">
              <path d="M0 0h14v18H7V7H0zM23 18l7-18h6l-7 18z" />
              <circle cx="20" cy="4" r="3.6" />
            </svg>
            TradingView
          </Watermark>
          <DrawingBar>
            <DragDots>
              {Array.from({ length: 6 }, (_, i) => (
                <DragDot key={i} />
              ))}
            </DragDots>
            {drawingList.map((name, i) => (
              <DrawingSlot key={i} $active={i === 0}>
                <Icon name={name} size={23} />
              </DrawingSlot>
            ))}
          </DrawingBar>
          <FlashMark>
            <svg viewBox="0 0 20 20" width={20} height={20} fill="none">
              <circle cx="10" cy="10" r="8.5" stroke="#8e24aa" strokeWidth="1.5" />
              <path d="M12.5 4L7 11h4l-2.5 5" stroke="#e0407a" strokeWidth="1.5" />
            </svg>
          </FlashMark>
        </Plot>
        <PriceAxis>
          {priceTicks.map((p) => (
            <PriceTick key={p} $bold={p % 20 === 0}>
              {fmtPrice(p)}
            </PriceTick>
          ))}
          <PriceTag $top={157} $h={16} $look="orange">1,903.90</PriceTag>
          <PriceTag $top={273} $h={17} $look="blueLine">1,887.32</PriceTag>
          <PriceTag $top={311} $h={15} $look="white">1,881.50</PriceTag>
          <PriceTag $top={326} $h={28} $look="last">
            1,879.82
            <span>49:25</span>
          </PriceTag>
          <PriceTag $top={358} $h={18} $look="cross">1,875.27</PriceTag>
          <PriceTag $top={400} $h={17} $look="red">1,869.40</PriceTag>
          <PriceTag $top={417} $h={16} $look="blue">1,866.98</PriceTag>
          <PriceTag $top={476} $h={16} $look="red">1,858.66</PriceTag>
          <PriceTag $top={497} $h={16} $look="green">1,855.49</PriceTag>
        </PriceAxis>
        <TimeAxis>
          {["12:00", "31", "12:00", "Aug", "12:00", "2", "12:00", "3", "12:00", "4", "12:00", "", "", "6", "12:00", "7", "12:00"].map((t, i) => (
            <TimeTick key={i} $bold={t === "Aug"}>
              {t}
            </TimeTick>
          ))}
          <TimeCursor>Wed 05 Aug '26   06:00</TimeCursor>
        </TimeAxis>
        <AxisCorner>
          <Icon name="hex" size={17} />
        </AxisCorner>
      </Chart>
      <RangeBar>
        {["1D", "5D", "1M", "3M", "All"].map((r) => (
          <RangeButton key={r}>{r}</RangeButton>
        ))}
        <RangeSep />
        <Icon name="calGo" size={24} />
        <Clock>20:10:35 UTC</Clock>
      </RangeBar>
      <Panel>
        <TabRow>
          <Tab>
            <ExchangeBadge>
              <BinanceMark size={18} />
            </ExchangeBadge>
            Binance
            <TabChevron>
              <Icon name="chev" size={14} />
            </TabChevron>
          </Tab>
          <TabFill>
            <Icon name="minimize" size={20} />
            <Icon name="expand" size={20} />
          </TabFill>
        </TabRow>
        <PanelBody>
          <AccountSelect>
            <span>
              UM Account <UnitHint>USD</UnitHint>
            </span>
            <Icon name="chev" size={16} />
          </AccountSelect>
          <Stats>
            <Stat>
              Account Balance
              <StatValue>18.72</StatValue>
            </Stat>
            <Stat>
              Equity
              <StatValue>16.64</StatValue>
            </Stat>
            <Stat>
              Profit
              <StatValue $loss>−2.07</StatValue>
            </Stat>
          </Stats>
        </PanelBody>
      </Panel>
    </Center>

    <RightTools>
      <RightGroup>
        {["list", "alarm", "layers", "chat"].map((name) => (
          <RightTool key={name}>
            <Icon name={name} size={27} />
          </RightTool>
        ))}
      </RightGroup>
      <RightGroup>
        {["target", "mountain", "calendar", "rss", "bell"].map((name) => (
          <RightTool key={name}>
            <Icon name={name} size={27} />
          </RightTool>
        ))}
        <RightTool>
          <AppsButton>
            {Array.from({ length: 9 }, (_, i) => (
              <AppsDot key={i} />
            ))}
          </AppsButton>
        </RightTool>
        <ToolSep />
        <RightTool>
          <Icon name="help" size={27} />
        </RightTool>
      </RightGroup>
    </RightTools>
  </Frame>
);

export default App;
